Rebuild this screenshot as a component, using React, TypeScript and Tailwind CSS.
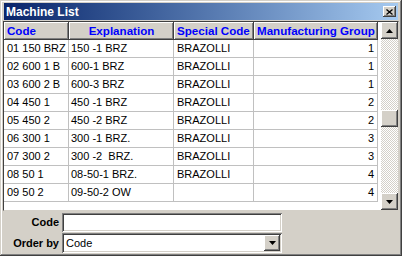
import React from "react";

type Row = { code: string; expl: string; special: string; group: number };

const rows: Row[] = [
  { code: "01 150 BRZ", expl: "150 -1 BRZ", special: "BRAZOLLI", group: 1 },
  { code: "02 600 1 B", expl: "600-1 BRZ", special: "BRAZOLLI", group: 1 },
  { code: "03 600 2 B", expl: "600-3 BRZ", special: "BRAZOLLI", group: 1 },
  { code: "04 450 1", expl: "450 -1 BRZ", special: "BRAZOLLI", group: 2 },
  { code: "05 450 2", expl: "450 -2 BRZ", special: "BRAZOLLI", group: 2 },
  { code: "06 300 1", expl: "300 -1 BRZ.", special: "BRAZOLLI", group: 3 },
  { code: "07 300 2", expl: "300 -2  BRZ.", special: "BRAZOLLI", group: 3 },
  { code: "08 50 1", expl: "08-50-1 BRZ.", special: "BRAZOLLI", group: 4 },
  { code: "09 50 2", expl: "09-50-2 OW", special: "", group: 4 },
];

const raised =
  "bg-[#d4d0c8] shadow-[inset_-1px_-1px_#404040,inset_1px_1px_#ffffff,inset_-2px_-2px_#808080]";
const sunken =
  "shadow-[inset_1px_1px_#808080,inset_-1px_-1px_#ffffff,inset_2px_2px_#404040,inset_-2px_-2px_#d4d0c8]";

function Arrow({ up }: { up?: boolean }) {
  return (
    <svg width="7" height="4" viewBox="0 0 7 4">
      <polygon points={up ? "3.5,0 7,4 0,4" : "0,0 7,0 3.5,4"} fill="#000" />
    </svg>
  );
}

export default function App() {
  const cols = "grid grid-cols-[65px_105px_80px_124px]";
  return (
    <div
      className="w-[402px] h-[256px] bg-[#d4d0c8] p-[3px] flex flex-col shadow-[inset_-1px_-1px_#404040,inset_1px_1px_#d4d0c8,inset_-2px_-2px_#808080,inset_2px_2px_#ffffff]"
      style={{ fontFamily: '"Liberation Sans", Arial, sans-serif' }}
    >
      {/* title bar */}
      <div className="h-[17px] mx-px flex items-center justify-between pl-[2px] pr-[2px] bg-gradient-to-r from-[#0a246a] to-[#a6caf0]">
        <span className="text-white font-bold text-[12px] leading-none">Machine List</span>
        <div className={`w-[13px] h-[11px] flex items-center justify-center ${raised}`}>
          <svg width="7" height="6" viewBox="0 0 7 6">
            <path d="M0.5 0.5 L6.5 5.5 M6.5 0.5 L0.5 5.5" stroke="#000" strokeWidth="1.3" />
          </svg>
        </div>
      </div>

      {/* grid */}
      <div className="mt-px h-[190px] border border-[#404040] border-r-[#d4d0c8] border-b-[#d4d0c8] flex bg-white">
        <div className="flex-1 flex flex-col text-[11px] leading-none">
          <div className={`${cols} h-[18px]`}>
            {["Code", "Explanation", "Special Code", "Manufacturing Group"].map((h, i) => (
              <div
                key={h}
                className={`${raised} flex items-center text-[#0000ff] font-bold text-[11.6px] whitespace-nowrap overflow-hidden ${
                  i === 1 ? "justify-center" : "pl-[3px]"
                }`}
              >
                {h}
              </div>
            ))}
          </div>
          {rows.map((r) => (
            <div key={r.code} className={`${cols} h-[18px] text-black`}>
              <div className="border-r border-b border-[#c0c0c0] flex items-center pl-[3px] whitespace-pre">{r.code}</div>
              <div className="border-r border-b border-[#c0c0c0] flex items-center pl-[2px] whitespace-pre">{r.expl}</div>
              <div className="border-r border-b border-[#c0c0c0] flex items-center pl-[3px]">{r.special}</div>
              <div className="border-r border-b border-[#c0c0c0] flex items-center justify-end pr-[3px]">{r.group}</div>
            </div>
          ))}
        </div>
        {/* scrollbar */}
        <div className="w-[17px] flex flex-col bg-[repeating-conic-gradient(#d4d0c8_0_25%,#ffffff_0_50%)] bg-[length:2px_2px]">
          <div className={`h-[17px] flex items-center justify-center ${raised}`}>
            <Arrow up />
          </div>
          <div className="h-[71px]" />
          <div className={`h-[17px] ${raised}`} />
          <div className="flex-1" />
          <div className={`h-[17px] flex items-center justify-center ${raised}`}>
            <Arrow />
          </div>
        </div>
      </div>

      {/* filter fields */}
      <div className="grid grid-cols-[56px_220px] gap-x-[3px] gap-y-[1px] mt-[2px] items-center">
        <span className="text-right font-bold text-[11px]">Code</span>
        <div className={`h-[19px] bg-white ${sunken}`} />
        <span className="text-right font-bold text-[11px]">Order by</span>
        <div className={`h-[20px] bg-white ${sunken} flex items-center justify-between pl-[4px] pr-[2px]`}>
          <span className="text-[11px]">Code</span>
          <div className={`w-[16px] h-[16px] flex items-center justify-center ${raised}`}>
            <Arrow />
          </div>
        </div>
      </div>
    </div>
  );
}
